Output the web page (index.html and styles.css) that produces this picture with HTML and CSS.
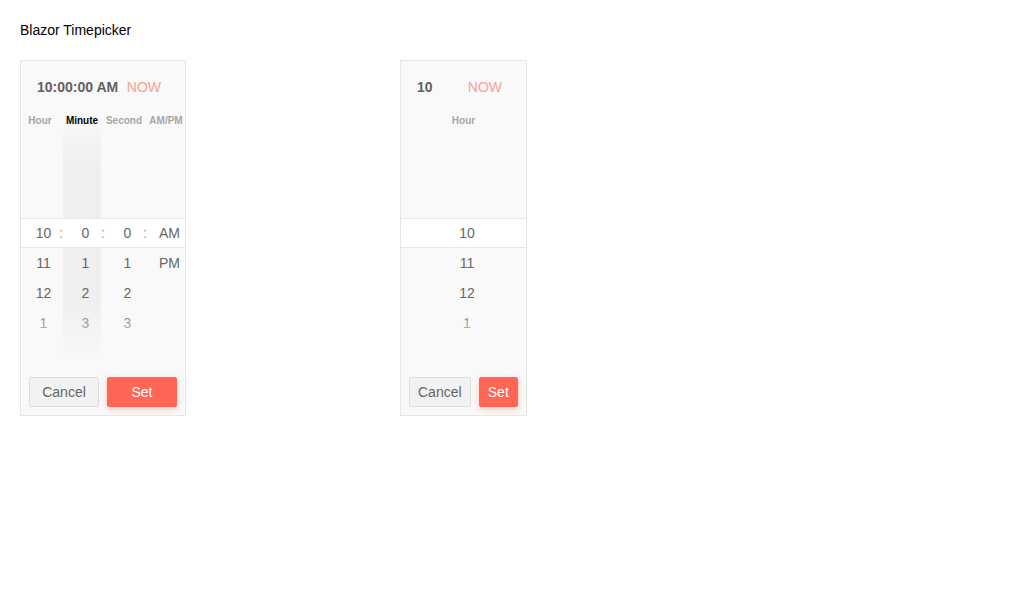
FILE: index.html
```html
<!DOCTYPE html>
<html>
<head>
<meta charset="utf-8">
<link rel="stylesheet" href="styles.css">
</head>
<body>
<div class="page">
  <div class="title">Blazor Timepicker</div>
  <div class="pickers">
    <div class="picker picker-full">
      <div class="picker-head"><span class="time">10:00:00 AM</span><span class="now">NOW</span></div>
      <div class="labels grid4">
        <div class="col-label">Hour</div><div></div>
        <div class="col-label active">Minute</div><div></div>
        <div class="col-label">Second</div><div></div>
        <div class="col-label">AM/PM</div>
      </div>
      <div class="wheel wheel-shade">
        <div class="spacer-top"></div>
        <div class="row grid4 selected">
          <div class="cell">10</div><div class="sep">:</div>
          <div class="cell">0</div><div class="sep">:</div>
          <div class="cell">0</div><div class="sep">:</div>
          <div class="cell">AM</div>
        </div>
        <div class="row grid4">
          <div class="cell">11</div><div></div>
          <div class="cell">1</div><div></div>
          <div class="cell">1</div><div></div>
          <div class="cell">PM</div>
        </div>
        <div class="row grid4">
          <div class="cell">12</div><div></div>
          <div class="cell">2</div><div></div>
          <div class="cell">2</div><div></div>
          <div class="cell"></div>
        </div>
        <div class="row grid4">
          <div class="cell">1</div><div></div>
          <div class="cell">3</div><div></div>
          <div class="cell">3</div><div></div>
          <div class="cell"></div>
        </div>
        <div class="spacer-bottom"></div>
      </div>
      <div class="picker-foot">
        <button class="btn btn-cancel">Cancel</button>
        <button class="btn btn-set">Set</button>
      </div>
    </div>

    <div class="picker picker-hour">
      <div class="picker-head"><span class="time">10</span><span class="now">NOW</span></div>
      <div class="labels grid1">
        <div class="col-label">Hour</div>
      </div>
      <div class="wheel">
        <div class="spacer-top"></div>
        <div class="row grid1 selected"><div class="cell">10</div></div>
        <div class="row grid1"><div class="cell">11</div></div>
        <div class="row grid1"><div class="cell">12</div></div>
        <div class="row grid1"><div class="cell">1</div></div>
        <div class="spacer-bottom"></div>
      </div>
      <div class="picker-foot">
        <button class="btn btn-cancel">Cancel</button>
        <button class="btn btn-set">Set</button>
      </div>
    </div>
  </div>
</div>
</body>
</html>
```
FILE: styles.css
```css
* { box-sizing: border-box; }
html, body { margin: 0; padding: 0; background: #ffffff; }
body { font-family: "Liberation Sans", Arial, sans-serif; color: #000; }
.page { padding: 20px; }
.title { font-size: 14px; line-height: 20px; color: #000; }
.pickers { display: flex; align-items: flex-start; gap: 214px; margin-top: 20px; }

.picker {
  background: #f9f9f9;
  border: 1px solid #e6e6e6;
  display: flex;
  flex-direction: column;
}
.picker-full { width: 166px; }
.picker-hour { width: 127px; }

.picker-head {
  height: 52px;
  display: flex;
  align-items: center;
  justify-content: space-between;
  padding: 0 24px 0 16px;
  font-size: 14px;
}
.time { font-weight: bold; color: #616161; }
.now { color: #f8a097; }

.grid4 { display: grid; grid-template-columns: 38px 4px 38px 4px 38px 4px 38px; }
.grid1 { display: grid; grid-template-columns: 1fr; }

.labels { height: 15px; }
.col-label {
  font-size: 10px;
  font-weight: bold;
  color: #a6a6a6;
  text-align: center;
  line-height: 15px;
  white-space: nowrap;
}
.col-label.active { color: #000; }

.wheel {
  position: relative;
  height: 225px;
  display: flex;
  flex-direction: column;
}
.wheel-shade {
  background: linear-gradient(to right, transparent 42px, #efefef 42px, #efefef 80px, transparent 80px);
}
.wheel::before, .wheel::after {
  content: "";
  position: absolute;
  left: 0;
  right: 0;
  pointer-events: none;
}
.wheel::before {
  top: 0;
  height: 40px;
  background: linear-gradient(to bottom, rgba(249,249,249,0.7), rgba(249,249,249,0));
}
.wheel::after {
  bottom: 0;
  height: 55px;
  background: linear-gradient(to top, rgba(249,249,249,0.85), rgba(249,249,249,0));
}
.spacer-top { height: 90px; flex: none; }
.spacer-bottom { height: 15px; flex: none; }

.row { height: 30px; flex: none; }
.row.selected {
  background: #ffffff;
  border-top: 1px solid #e6e6e6;
  border-bottom: 1px solid #e6e6e6;
}
.cell {
  font-size: 14px;
  line-height: 30px;
  color: #666666;
  text-align: center;
  padding-left: 7px;
  white-space: nowrap;
}
.row.selected .cell, .row.selected .sep { line-height: 28px; }
.sep {
  font-size: 14px;
  color: #999999;
  text-align: center;
  line-height: 28px;
}

.picker-foot {
  display: flex;
  gap: 8px;
  padding: 24px 8px 8px 8px;
}
.btn {
  width: 70px;
  height: 30px;
  padding: 0 8px;
  font-family: "Liberation Sans", Arial, sans-serif;
  font-size: 14px;
  border-radius: 2px;
  white-space: nowrap;
  cursor: pointer;
}
.btn-cancel {
  background: #f2f2f2;
  border: 1px solid #dcdcdc;
  color: #666666;
}
.btn-set {
  background: #ff6656;
  border: 1px solid #ff6656;
  color: #ffffff;
  box-shadow: 0 2px 6px rgba(255, 102, 86, 0.35);
}
```
